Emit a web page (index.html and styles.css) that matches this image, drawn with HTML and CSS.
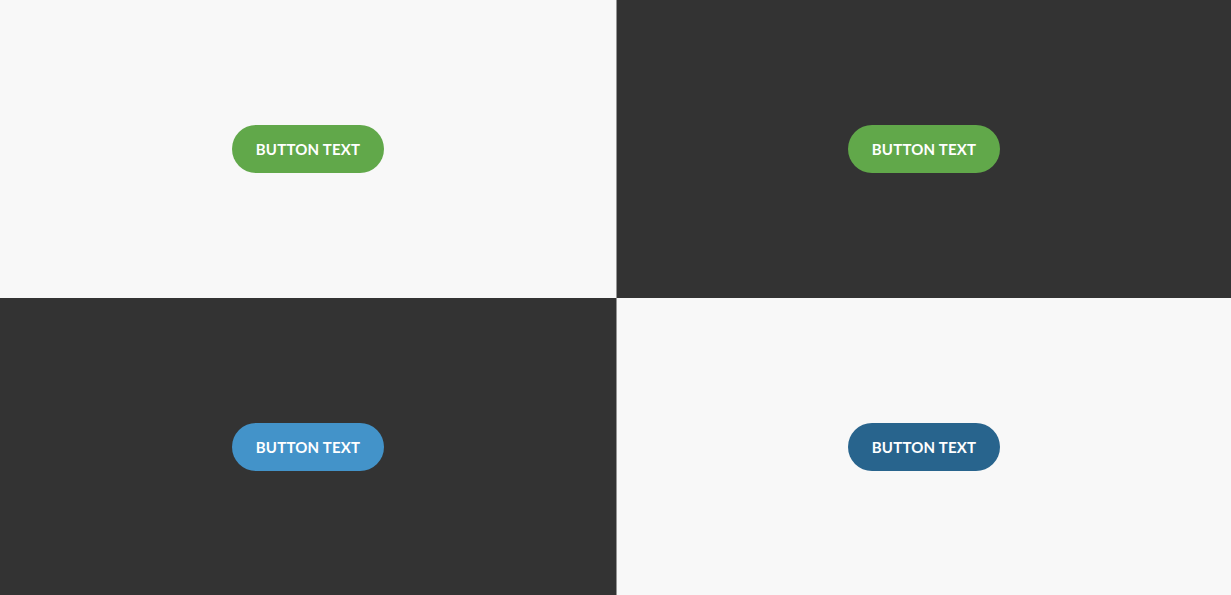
FILE: index.html
```html
<!DOCTYPE html>
<html lang="en">
<head>
    <meta charset="UTF-8">
    <meta name="viewport" content="width=device-width, initial-scale=1.0">
    <title>Buttons</title>
    <link rel="stylesheet" href="styles.css">
</head>
<body>
    <div class="grid">
        <div class="panel light left">
            <button class="btn green">BUTTON TEXT</button>
        </div>
        <div class="panel dark">
            <button class="btn green">BUTTON TEXT</button>
        </div>
        <div class="panel dark left">
            <button class="btn blue">BUTTON TEXT</button>
        </div>
        <div class="panel light">
            <button class="btn navy">BUTTON TEXT</button>
        </div>
    </div>
</body>
</html>
```

FILE: styles.css
```css
body {
    margin: 0;
    height: 100vh;
    font-family: 'Lato', sans-serif;
    overflow: hidden;
}

.grid {
    display: grid;
    grid-template-columns: 617px 1fr;
    grid-template-rows: 298px 1fr;
    height: 100%;
}

.panel {
    display: flex;
    justify-content: center;
    align-items: center;
    box-sizing: border-box;
}

.left {
    border-right: 1px solid #959595;
}

.light {
    background-color: #f8f8f8;
}

.dark {
    background-color: #333333;
}

.btn {
    height: 48px;
    padding: 0 24px;
    border: none;
    border-radius: 24px;
    color: white;
    font-family: 'Lato', sans-serif;
    font-weight: bold;
    font-size: 15px;
    letter-spacing: 0.2px;
    cursor: pointer;
}

.green {
    background-color: #61a84a;
}

.blue {
    background-color: #4393c9;
}

.navy {
    background-color: #28648d;
}
```
